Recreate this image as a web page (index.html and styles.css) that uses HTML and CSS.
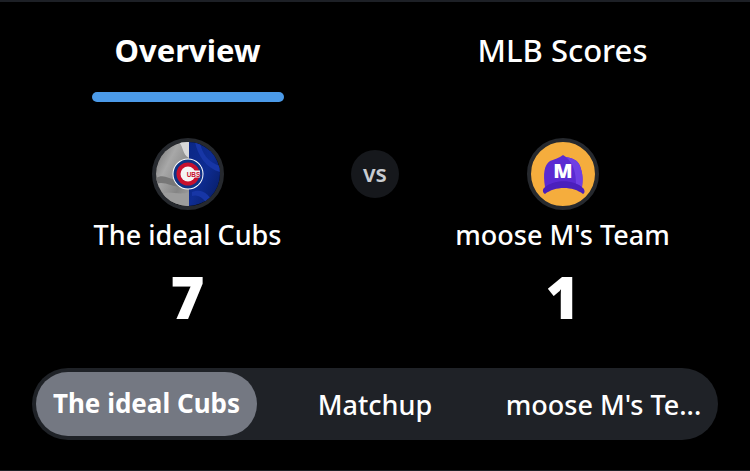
FILE: index.html
```html
<!DOCTYPE html>
<html lang="en">
<head>
<meta charset="utf-8">
<title>Matchup</title>
<link rel="stylesheet" href="styles.css">
</head>
<body>
<main class="screen">
  <nav class="tabs">
    <div class="tab tab-active"><span class="tab-label">Overview</span><span class="tab-bar"></span></div>
    <div class="tab"><span class="tab-label">MLB Scores</span></div>
  </nav>
  <section class="matchup">
    <div class="team">
      <div class="avatar">
        <svg viewBox="0 0 64 64" width="64" height="64" aria-hidden="true">
          <defs>
            <linearGradient id="silk" x1="0" y1="0" x2="1" y2="1">
              <stop offset="0" stop-color="#6c6c6c"/><stop offset="0.35" stop-color="#a8a8a8"/><stop offset="0.7" stop-color="#858585"/><stop offset="1" stop-color="#a4a4a4"/>
            </linearGradient>
            <linearGradient id="blue" x1="0" y1="0" x2="1" y2="1">
              <stop offset="0" stop-color="#0a2785"/><stop offset="0.5" stop-color="#0e2c92"/><stop offset="1" stop-color="#061a5e"/>
            </linearGradient>
          </defs>
          <rect x="0" y="0" width="33" height="64" fill="url(#silk)"/>
          <path d="M0 36 C10 30 16 42 33 38 L33 44 C18 48 10 38 0 42Z" fill="#777"/>
          <path d="M23 0 C28 6 26 12 33 16 L33 0Z" fill="#d8d8d8"/>
          <path d="M6 52 C14 48 22 54 33 50 L33 64 L6 64Z" fill="#9c9c9c"/>
          <rect x="33" y="0" width="31" height="64" fill="url(#blue)"/>
          <path d="M44 0 C46 12 52 20 64 24 L64 30 C50 26 42 14 39 0Z" fill="#1736a6"/>
          <path d="M36 50 C46 46 54 52 58 64 L52 64 C48 56 42 52 36 54Z" fill="#1736a6"/>
          <circle cx="32" cy="32" r="15.5" fill="#fff"/>
          <circle cx="32" cy="32" r="14.5" fill="#0e3386"/>
          <circle cx="32" cy="32" r="11.5" fill="#c8102e"/>
          <circle cx="32" cy="32" r="7.5" fill="#f4f4f4"/>
          <rect x="32" y="28.5" width="12" height="7" fill="#f4f4f4"/>
          <text class="cubs-letters" x="37.5" y="34.6" text-anchor="middle">UBS</text>
        </svg>
      </div>
      <div class="team-name">The ideal Cubs</div>
      <div class="score">7</div>
    </div>
    <div class="vs">vs</div>
    <div class="team">
      <div class="avatar avatar-gold">
        <svg viewBox="0 0 64 64" width="64" height="64" aria-hidden="true">
          <path d="M14 45 C12 32 13 23 19 19 C24 17 27 16 29 15 L32 13 L35 15 C41 16 47 18 49 24 C52 32 52 38 51 45 Z" fill="#5a2ad2"/>
          <path d="M35 15 C41 16 47 18 49 24 C52 32 52 38 51 45 L45 42 C45 32 43 22 35 15Z" fill="#6f3fe4"/>
          <path d="M13 46 C22 37 43 37 52 46 C54 48 54 51 52 52 C42 44 24 44 14 52 C12 51 11 48 13 46Z" fill="#4a1fbc"/>
          <text class="cap-letter" x="32" y="36" text-anchor="middle">M</text>
        </svg>
      </div>
      <div class="team-name">moose M's Team</div>
      <div class="score">1</div>
    </div>
  </section>
  <div class="segments">
    <div class="segment segment-active">The ideal Cubs</div>
    <div class="segment segment-mid">Matchup</div>
    <div class="segment segment-side">moose M's Te...</div>
  </div>
</main>
</body>
</html>
```

FILE: styles.css
```css
* { box-sizing: border-box; }
html, body { margin: 0; height: 100%; background: #000; }
body { overflow: hidden; }
.screen {
  width: 750px;
  height: 471px;
  background: #000;
  color: #fff;
  font-family: "Noto Sans", "Open Sans", sans-serif;
  border-top: 2px solid #1d2026;
  border-bottom: 1px solid #1d2026;
  display: flex;
  flex-direction: column;
}
.tabs { display: flex; height: 100px; }
.tab {
  flex: 1;
  display: flex;
  flex-direction: column;
  align-items: center;
  padding-top: 27px;
}
.tab-label { font-size: 31px; line-height: 42px; font-weight: 500; }
.tab-active .tab-label { font-weight: 700; }
.tab-bar {
  width: 192px;
  height: 10px;
  margin-top: 21px;
  border-radius: 5px;
  background: #4b9ae8;
}
.matchup {
  position: relative;
  display: flex;
  align-items: flex-start;
  height: 266px;
  padding-top: 36px;
}
.team {
  flex: 1;
  display: flex;
  flex-direction: column;
  align-items: center;
}
.avatar {
  width: 72px;
  height: 72px;
  border-radius: 50%;
  border: 4px solid #26292e;
  overflow: hidden;
  background: #000;
  flex: none;
}
.avatar svg { display: block; }
.avatar-gold { background: #f5ad3d; }
.cap-letter { font-family: "Noto Sans", sans-serif; font-weight: 900; font-size: 20px; fill: #fff; }
.cubs-letters { font-family: "Liberation Sans", sans-serif; font-weight: 700; font-size: 6.5px; fill: #c8102e; }
.team-name { font-size: 27px; line-height: 38px; margin-top: 6px; font-weight: 500; }
.score { font-size: 58px; line-height: 70px; font-weight: 900; margin-top: 8px; }
.vs {
  position: absolute;
  left: 351px;
  top: 48px;
  width: 48px;
  height: 48px;
  border-radius: 50%;
  background: #16181c;
  color: #c9ccd1;
  font-size: 23px;
  font-weight: 600;
  display: flex;
  align-items: center;
  justify-content: center;
  padding-bottom: 3px;
}
.segments {
  display: flex;
  align-items: center;
  margin-left: 32px;
  width: 686px;
  height: 72px;
  padding: 4px;
  border-radius: 36px;
  background: #1f2227;
}
.segment {
  font-size: 27px;
  font-weight: 500;
  text-align: center;
  white-space: nowrap;
  flex: none;
}
.segment-mid { width: 236px; }
.segment-side { width: 221px; }
.segment-active {
  width: 221px;
  height: 64px;
  font-size: 26px;
  line-height: 62px;
  border-radius: 32px;
  background: #747882;
  font-weight: 700;
}
```
